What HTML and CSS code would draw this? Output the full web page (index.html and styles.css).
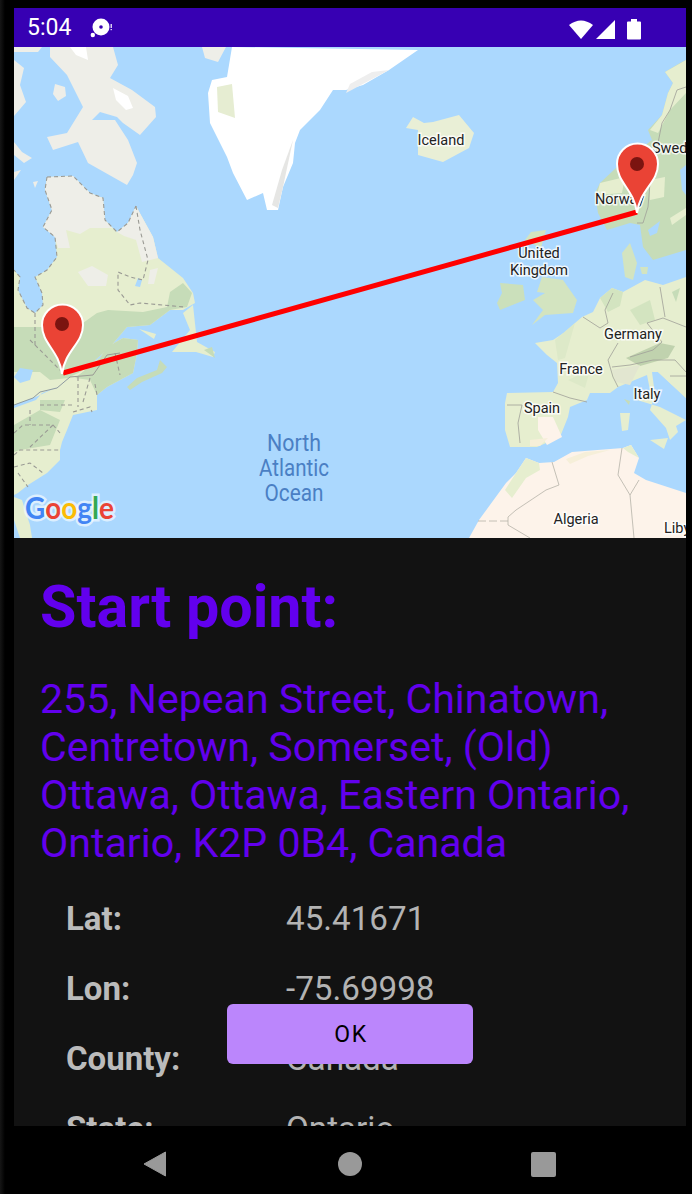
FILE: index.html
```html
<!DOCTYPE html>
<html lang="en">
<head>
    <meta charset="UTF-8">
    <meta name="viewport" content="width=device-width, initial-scale=1.0">
    <title>Route details</title>
    <link rel="stylesheet" href="styles.css">
</head>
<body>

    <div class="screen">
        <!-- Status bar -->
        <div class="status-bar">
            <span class="clock">5:04</span>
            <svg class="status-disc" width="24" height="22" viewBox="0 0 24 22">
                <circle cx="11" cy="9" r="8.5" fill="#fff"/>
                <circle cx="11" cy="9" r="1.8" fill="#3700b3"/>
                <circle cx="2.8" cy="17" r="2.2" fill="#fff"/>
                <rect x="20.6" y="6" width="1.2" height="4" fill="#fff"/>
                <rect x="20.6" y="11" width="1.2" height="1.2" fill="#fff"/>
            </svg>
            <svg class="status-icons" width="74" height="22" viewBox="0 0 74 22">
                <path d="M2 7 Q14 -2 26 7 L14 21 Z" fill="#fff"/>
                <path d="M29 21 L48 2 V21 Z" fill="#fff"/>
                <path d="M60 4.5 a1 1 0 0 1 1 -1 h3 v-2.500 h6 v2.500 h3 a1 1 0 0 1 1 1 v16 a1 1 0 0 1 -1 1 h-12 a1 1 0 0 1 -1 -1 Z" fill="#fff"/>
            </svg>
        </div>

        <!-- Map -->
        <svg class="map" viewBox="14 47 672 491" width="672" height="491">
            <rect x="14" y="47" width="672" height="491" fill="#abd8fe"/>

            <!-- Arctic -->
            <g fill="#eeeee8">
                <path d="M50 47 L113 47 L118 65 L110 78 L132 90 L155 107 L156 117 L140 135 L123 123 L117 117 L100 112 L92 120 L115 120 L128 140 L137 163 L133 175 L127 185 L88 163 L78 142 L53 150 L47 137 L67 133 L83 107 L67 75 L50 57 Z"/>
                <path d="M14 60 L24 68 L20 85 L26 102 L14 116 Z"/>
                <path d="M14 142 L22 152 L32 158 L24 163 L14 155 Z"/>
                <path d="M14 172 L21 170 L14 180 Z"/>
                <path d="M55 84 L65 87 L66 96 L58 101 L53 94 Z"/>
                <path d="M33 182 L38 181 L35 188 Z"/>
                <path d="M202 47 L226 47 L218 62 L205 58 Z"/>
                <path d="M14 47 L42 47 L38 52 L14 52 Z"/>
            </g>
            <path d="M113 88 L128 96 L133 108 L126 110 L116 100 Z" fill="#fff"/>
            <path d="M70 47 L86 47 L88 60 L76 55 Z" fill="#fff"/>

            <!-- Greenland -->
            <path d="M232 47 L418 50 L389 70 L363 85 L346 90 L333 90 L320 110 L300 130 L295 143 L293 163 L283 187 L278 210 L267 210 L263 193 L247 200 L233 173 L227 157 L210 123 L208 93 L212 80 L227 77 Z" fill="#fff"/>
            <path d="M217 87 L232 84 L235 118 L218 112 Z" fill="#e6edd2"/>
            <path d="M346 93 L389 70 L372 72 L350 84 Z" fill="#eeeeee"/>
            <path d="M293 140 L283 187 L278 208 L272 205 L282 170 Z" fill="#e6e6e4"/>

            <!-- Iceland -->
            <path d="M413 117 L424 123 L433 122 L459 115 L474 133 L469 148 L443 162 L418 155 L418 130 L406 128 Z" fill="#e9efd6"/>

            <!-- North America -->
            <path d="M47 177 L73 176 L90 193 L103 198 L105 220 L117 232 L128 223 L136 206 L153 237 L158 258 L183 278 L193 293 L195 303 L183 310 L170 310 L150 325 L127 327 L110 347 L93 362 L100 358 L107 347 L123 338 L138 340 L137 353 L133 373 L120 380 L107 387 L97 395 L97 410 L73 415 L67 430 L62 442 L60 450 L60 460 L47 473 L28 485 L18 493 L14 495 L14 270 L20 277 L18 290 L27 308 L35 313 L43 305 L42 293 L35 277 L47 270 L57 257 L55 237 L43 227 L52 210 L45 190 Z" fill="#e6eecf"/>
            <path d="M14 497 L22 500 L30 525 L32 538 L20 538 L14 520 Z" fill="#e6eecf"/>
            <!-- north, bare -->
            <path d="M47 177 L73 176 L90 193 L103 198 L105 220 L112 228 L90 228 L80 234 L66 230 L70 248 L58 248 L55 237 L43 227 L52 210 L45 190 Z" fill="#eeeee8"/>
            <path d="M117 232 L128 223 L136 206 L153 237 L158 258 L142 262 L136 240 L124 236 Z" fill="#eeeee8"/>
            <path d="M78 272 L92 266 L108 275 L106 286 L88 286 Z" fill="#eeeee8"/>
            <path d="M150 270 L158 268 L154 284 L148 284 Z" fill="#eeeee8"/>
            <!-- south, forest -->
            <path d="M14 327 L42 327 L83 323 L97 313 L108 310 L143 312 L167 307 L170 292 L183 283 L192 293 L187 307 L170 310 L150 325 L127 327 L110 347 L93 362 L80 372 L68 378 L50 380 L40 372 L14 372 Z" fill="#c6dcb8"/>
            <path d="M100 358 L107 347 L123 338 L138 340 L137 353 L133 373 L120 380 L107 387 L97 395 L90 380 L75 378 Z" fill="#c6dcb8"/>
            <path d="M14 425 L40 410 L60 420 L50 445 L20 450 L14 452 Z" fill="#c6dcb8"/>
            <path d="M40 400 L65 400 L60 412 L40 410 Z" fill="#c6dcb8"/>
            <path d="M127 387 L137 378 L157 370 L160 360 L167 367 L162 373 L142 382 L130 390 Z" fill="#c6dcb8"/>
            <path d="M183 313 L193 305 L197 342 L215 352 L213 357 L196 352 L172 352 L190 330 Z" fill="#e6eecf"/>
            <path d="M139 329 L156 334 L154 339 Z" fill="#e6eecf"/>
            <path d="M204 350 L212 347 L215 358 Z" fill="#c6dcb8"/>
            <!-- lakes -->
            <path d="M20 368 L33 370 L30 380 L20 383 L14 377 Z" fill="#abd8fe"/>
            <path d="M14 405 L38 396 L57 387 L42 393 L36 400 L14 408 Z" fill="#abd8fe"/>
            <path d="M138 278 L142 280 L140 287 L135 286 Z" fill="#abd8fe"/>
            <path d="M70 377 L57 388 L40 392 L33 398 L14 405" fill="none" stroke="#8f9aa0" stroke-width="1"/>
            <path d="M70 377 L93 375 L107 355 L120 353" fill="none" stroke="#9a9a94" stroke-width="1"/>
            <g fill="none" stroke="#9a9a94" stroke-width="1.1" stroke-dasharray="4 3">
                <path d="M47 177 L73 176 L90 193 L103 198 L105 220 L117 232 L128 223 L136 206"/>
                <path d="M47 177 L45 190 L52 210 L43 227 L55 237 L57 257 L47 270 L35 277 L42 293 L43 305 L35 313 L27 308 L18 290 L20 277 L14 270"/>
                <path d="M136 206 L140 230 L148 260 L143 280 L130 277 L118 272 L118 290 L130 305 L140 303 L185 307"/>
                <path d="M35 313 L35 345 M30 340 L62 372"/>
                <path d="M78 377 L78 407 M90 378 L83 402 M95 384 L97 395"/>
                <path d="M40 405 L73 405 M73 412 L90 407 L92 412"/>
                <path d="M30 410 L30 425 M14 433 L23 425 L53 425 L60 433 M53 425 L30 447"/>
                <path d="M14 455 L20 450 L60 450 M14 467 L30 463 L43 473 M18 473 L28 487"/>
                <path d="M115 353 L120 375"/>
            </g>

            <!-- Scandinavia -->
            <path d="M686 60 L680 63 L665 72 L673 83 L668 93 L662 115 L648 130 L652 140 L617 167 L600 183 L595 193 L598 213 L607 230 L630 223 L640 225 L643 247 L653 260 L686 250 Z" fill="#c6dcb8"/>
            <path d="M686 60 L665 72 L673 83 L668 93 L662 115 L650 130 L658 133 L670 110 L686 93 Z" fill="#e6eecf"/>
            <path d="M600 183 L625 177 L622 193 L597 195 Z" fill="#e6eecf"/>
            <path d="M650 180 L665 177 L664 197 L650 200 Z" fill="#e6eecf"/>
            <path d="M670 218 L686 208 L686 215 L672 225 Z" fill="#e6eecf"/>
            <path d="M680 170 L686 165 L686 195 L682 190 Z" fill="#abd8fe"/>
            <path d="M648 230 L660 221 L657 233 L650 236 Z" fill="#abd8fe"/>
            <path d="M630 243 L622 253 L625 277 L633 280 L637 263 Z" fill="#d3e4c0"/>
            <path d="M640 267 L648 267 L647 274 L642 274 Z" fill="#d3e4c0"/>
            <path d="M686 87 L677 90 L670 110 L662 123 L650 183 L648 207 L643 223 L637 223" fill="none" stroke="#a0a098" stroke-width="0.8"/>

            <!-- Britain and Ireland -->
            <path d="M531 232 L546 230 L541 248 L525 240 Z" fill="#d3e4c0"/>
            <path d="M542 277 L563 280 L577 300 L573 313 L545 315 L532 325 L543 310 L533 300 L545 293 L537 292 Z" fill="#d3e4c0"/>
            <path d="M500 283 L523 285 L525 300 L500 310 L497 303 L502 293 Z" fill="#cbe0bb"/>

            <!-- Europe -->
            <path d="M686 277 L663 285 L645 280 L623 292 L612 288 L600 298 L593 312 L582 317 L575 323 L565 332 L553 340 L535 343 L547 355 L557 363 L558 383 L553 392 L507 393 L505 403 L505 430 L510 447 L518 447 L537 447 L560 437 L568 417 L570 407 L587 400 L590 393 L610 393 L618 387 L647 375 L650 390 L637 400 L660 407 L676 415 L686 420 L676 426 L678 432 L670 440 L666 428 L650 410 L655 395 L652 372 L658 372 L686 398 Z" fill="#e6eecf"/>
            <path d="M652 372 L686 372 L686 398 L658 372 Z" fill="#e6eecf"/>
            <path d="M620 413 L630 413 L628 430 L622 431 Z" fill="#e6eecf"/>
            <path d="M650 440 L668 438 L664 449 Z" fill="#e6eecf"/>
            <path d="M624 399 L630 401 L629 405 Z" fill="#c6dcb8"/>
            <!-- patches -->
            <path d="M600 298 L612 288 L623 292 L620 306 L608 312 Z" fill="#d3e4c0"/>
            <path d="M630 310 L650 300 L655 320 L640 325 Z" fill="#d3e4c0"/>
            <path d="M672 292 L680 288 L676 302 Z" fill="#c6dcb8"/>
            <path d="M555 340 L575 323 L565 358 L558 360 Z" fill="#dde9c8"/>
            <path d="M568 380 L590 370 L585 388 Z" fill="#dde9c8"/>
            <path d="M626 358 L660 343 L675 346 L668 358 L640 366 Z" fill="#c0d2ae"/>
            <path d="M612 370 L640 365 L630 385 L616 382 Z" fill="#e2e6d0"/>
            <path d="M538 417 L553 417 L562 437 L547 445 L538 430 Z" fill="#fdf3ea"/>
            <path d="M530 440 L548 438 L540 446 L530 446 Z" fill="#f6efd9"/>
            <g fill="none" stroke="#a0a098" stroke-width="0.8">
                <path d="M553 392 L570 398 L587 402"/>
                <path d="M507 405 L522 405 L518 423 L520 443"/>
                <path d="M583 317 L600 328 L608 323 L605 310 L613 293"/>
                <path d="M608 360 L618 343 M608 360 L613 377 L618 387"/>
                <path d="M612 367 L630 365 L653 360 L675 360 L686 372"/>
                <path d="M630 357 L653 350 L662 342 L647 323 L663 318 L686 327"/>
                <path d="M660 287 L665 317 M670 376 L686 376"/>
            </g>

            <!-- North Africa -->
            <path d="M526 458 L539 463 L554 462 L572 452 L623 448 L631 445 L639 458 L634 473 L646 480 L686 493 L686 538 L469 538 L479 520 L506 483 L516 473 Z" fill="#fdf3ea"/>
            <path d="M526 458 L539 463 L540 470 L526 478 L512 498 L505 490 L516 473 Z" fill="#e6eecf"/>
            <path d="M623 448 L631 445 L639 458 L628 452 Z" fill="#e6eecf"/>
            <path d="M566 459 L585 452 L610 450 L588 456 L570 464 Z" fill="#f6efd9"/>
            <g fill="none" stroke="#b5b2a8" stroke-width="0.8">
                <path d="M552 462 L559 485 L546 490 L516 510 L508 517 L508 525 L530 538"/>
                <path d="M622 448 L618 475 L630 495 L634 538"/>
                <path d="M639 480 L630 495"/>
                <path d="M478 521 L508 521" stroke-dasharray="8 3"/>
            </g>

            <!-- Labels -->
            <g class="map-label">
                <text x="441" y="145">Iceland</text>
                <text x="652" y="153" class="map-label-start">Swed</text>
                <text x="595" y="204" class="map-label-start">Norway</text>
                <text x="539" y="258">United</text>
                <text x="539" y="275">Kingdom</text>
                <text x="633" y="339">Germany</text>
                <text x="581" y="374">France</text>
                <text x="647" y="399">Italy</text>
                <text x="542" y="413">Spain</text>
                <text x="576" y="524">Algeria</text>
                <text x="664" y="533" class="map-label-start">Liby</text>
            </g>
            <g class="ocean-label">
                <text x="294" y="451" textLength="54" lengthAdjust="spacingAndGlyphs">North</text>
                <text x="294" y="476" textLength="70" lengthAdjust="spacingAndGlyphs">Atlantic</text>
                <text x="294" y="501" textLength="59" lengthAdjust="spacingAndGlyphs">Ocean</text>
            </g>

            <!-- Route -->
            <line x1="63" y1="373" x2="637" y2="212" stroke="#ff0000" stroke-width="5"/>

            <!-- Markers -->
            <g stroke="#fff" stroke-width="2">
                <path d="M62 374 C59 350 42 344 42 325 A20.500 20.500 0 0 1 83 325 C83 344 65 350 62 374 Z" fill="#ea4335"/>
                <path d="M637 213 C634 189 617 183 617 164 A20.500 20.500 0 0 1 658 164 C658 183 640 189 637 213 Z" fill="#ea4335"/>
            </g>
            <circle cx="62" cy="324" r="7" fill="#7b1410"/>
            <circle cx="637" cy="164" r="7" fill="#7b1410"/>

            <!-- Logo -->
            <text class="google-logo" x="25" y="519" textLength="89" lengthAdjust="spacingAndGlyphs"><tspan fill="#4285f4">G</tspan><tspan fill="#ea4335">o</tspan><tspan fill="#fbbc05">o</tspan><tspan fill="#4285f4">g</tspan><tspan fill="#34a853">l</tspan><tspan fill="#ea4335">e</tspan></text>
        </svg>

        <!-- Details -->
        <div class="details">
            <h1 class="details-title">Start point:</h1>
            <p class="details-address">255, Nepean Street, Chinatown, Centretown, Somerset, (Old) Ottawa, Ottawa, Eastern Ontario, Ontario, K2P 0B4, Canada</p>
            <div class="info-grid">
                <div class="info-label">Lat:</div>
                <div class="info-value">45.41671</div>
                <div class="info-label">Lon:</div>
                <div class="info-value">-75.69998</div>
                <div class="info-label">County:</div>
                <div class="info-value">Canada</div>
                <div class="info-label">State:</div>
                <div class="info-value">Ontario</div>
            </div>
            <button class="ok-button">OK</button>
        </div>

        <!-- Navigation bar -->
        <div class="nav-bar">
            <svg width="24" height="26" viewBox="0 0 24 26"><path d="M22.500 1 V25 L1 13 Z" fill="#999" stroke="#999" stroke-linejoin="round"/></svg>
            <svg width="24" height="24" viewBox="0 0 24 24"><circle cx="12" cy="12" r="12" fill="#999"/></svg>
            <svg width="25" height="25" viewBox="0 0 25 25"><rect width="25" height="25" rx="2" fill="#999"/></svg>
        </div>
    </div>

</body>
</html>
```

FILE: styles.css
```css
/* Global Styles */
* {
    margin: 0;
    padding: 0;
    box-sizing: border-box;
}

body {
    background: linear-gradient(90deg, #161616, #000 5px);
    font-family: 'Roboto', sans-serif;
    height: 1194px;
    overflow: hidden;
}

/* Device screen */
.screen {
    width: 672px;
    margin-left: 14px;
    padding-top: 8px;
}

/* Status bar */
.status-bar {
    height: 39px;
    background: #3700b3;
    color: #fff;
    display: flex;
    align-items: center;
    padding-left: 13px;
}

.clock {
    font-size: 23px;
    width: 63px;
}

.status-disc {
    margin-top: 2px;
}

.status-icons {
    margin-left: auto;
    margin-right: 45px;
    margin-top: 2px;
}

/* Map */
.map {
    display: block;
}

.map-label text {
    font-family: 'Roboto', sans-serif;
    font-size: 14.5px;
    fill: #222;
    text-anchor: middle;
    stroke: rgba(255, 255, 255, 0.8);
    stroke-width: 3px;
    paint-order: stroke;
}

.map-label .map-label-start {
    text-anchor: start;
}

.ocean-label text {
    font-family: 'Roboto', sans-serif;
    font-size: 23px;
    fill: #4a7fc4;
    text-anchor: middle;
}

.google-logo {
    font-family: 'Lato', sans-serif;
    font-size: 31px;
    font-weight: 700;
    stroke: rgba(255, 255, 255, 0.6);
    stroke-width: 5px;
    paint-order: stroke;
}

/* Details panel */
.details {
    position: relative;
    height: 588px;
    background: #121212;
    overflow: hidden;
    padding: 34px 26px 0;
}

.details-title {
    font-size: 59.2px;
    line-height: 70px;
    font-weight: 700;
    color: #6200ee;
}

.details-address {
    font-size: 41.1px;
    line-height: 48px;
    color: #6200ee;
    margin-top: 33px;
}

.info-grid {
    display: grid;
    grid-template-columns: 220px 1fr;
    grid-auto-rows: 70px;
    padding-left: 26px;
    margin-top: 16px;
    align-items: center;
}

.info-label {
    font-size: 33px;
    font-weight: 700;
    color: #bbb;
}

.info-value {
    font-size: 33.2px;
    color: #b3b3b3;
}

.ok-button {
    position: absolute;
    left: 213px;
    top: 466px;
    width: 246px;
    height: 60px;
    padding-left: 2px;
    border: none;
    border-radius: 6px;
    background: #bb86fc;
    color: #000;
    font-family: 'Roboto', sans-serif;
    font-size: 23px;
    font-weight: 400;
    letter-spacing: 1.5px;
}

/* Navigation bar */
.nav-bar {
    height: 68px;
    padding: 8px 0 0 129px;
    display: grid;
    grid-template-columns: 195px 193px 25px;
    align-items: center;
}
```
